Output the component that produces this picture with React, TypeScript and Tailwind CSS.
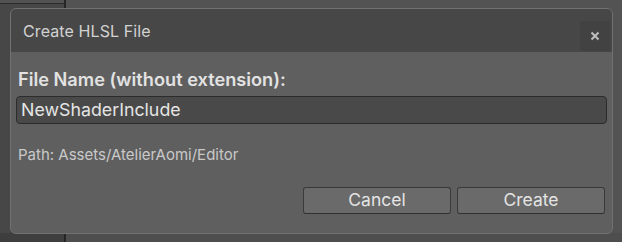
import React from "react";

export default function App() {
  return (
    <div
      className="relative w-[622px] h-[242px] overflow-hidden bg-[#535353]"
      style={{ fontFamily: "Inter, 'Noto Sans', sans-serif" }}
    >
      {/* background editor panels */}
      <div className="flex h-full">
        <div className="w-[64px] flex flex-col">
          <div className="h-[3px] bg-[#525252]" />
          <div className="h-[1px] bg-[#2a2a2a]" />
          <div className="flex-1 bg-[#474747]" />
          <div className="h-[9px] bg-[#3e3e3e]" />
        </div>
        <div className="w-[2px] bg-[#262626]" />
        <div className="flex-1 flex flex-col">
          <div className="flex-1 bg-[#535353]" />
          <div className="h-[9px] bg-[#4e4e4e]" />
        </div>
      </div>

      {/* dialog */}
      <div className="absolute left-[10px] top-[8px] w-[603px] h-[226px] rounded-[6px] border border-[#717171] bg-[#5f5f5f] overflow-hidden flex flex-col">
        <div className="h-[43px] bg-[#474747] flex items-center justify-between pl-[12px] pr-[2px]">
          <span className="text-[16px] text-[#d2d2d2] tracking-[0.1px]">Create HLSL File</span>
          <div className="w-[30px] h-[30px] mt-[10px] bg-[#424242] flex items-center justify-center">
            <svg width="10" height="10" viewBox="0 0 10 10">
              <path d="M1.5 1.5 L8.5 8.5 M8.5 1.5 L1.5 8.5" stroke="#bdbdbd" strokeWidth="2" />
            </svg>
          </div>
        </div>
        <div className="flex-1 flex flex-col px-[5px] pt-[16px]">
          <div className="pl-[2px] text-[18.2px] font-semibold text-[#e2e2e2] leading-[23px]">
            File Name (without extension):
          </div>
          <div className="mt-[5px] h-[28px] rounded-[4px] border border-[#2c2c2c] bg-[#494949] flex items-center pl-[4px] text-[17.8px] text-[#e4e4e4]">
            NewShaderInclude
          </div>
          <div className="mt-[21px] pl-[2px] text-[15px] text-[#c9c9c9] leading-[20px]">
            Path: Assets/AtelierAomi/Editor
          </div>
          <div className="mt-[22px] flex justify-end gap-[6px] pr-[2px]">
            <button className="w-[148px] h-[27px] rounded-[3px] bg-[#6a6a6a] border border-[#3a3a3a] border-b-[#2f2f2f] text-[17.5px] text-[#e4e4e4] flex items-center justify-center">
              Cancel
            </button>
            <button className="w-[148px] h-[27px] rounded-[3px] bg-[#6a6a6a] border border-[#3a3a3a] border-b-[#2f2f2f] text-[17.5px] text-[#e4e4e4] flex items-center justify-center">
              Create
            </button>
          </div>
        </div>
      </div>
    </div>
  );
}
